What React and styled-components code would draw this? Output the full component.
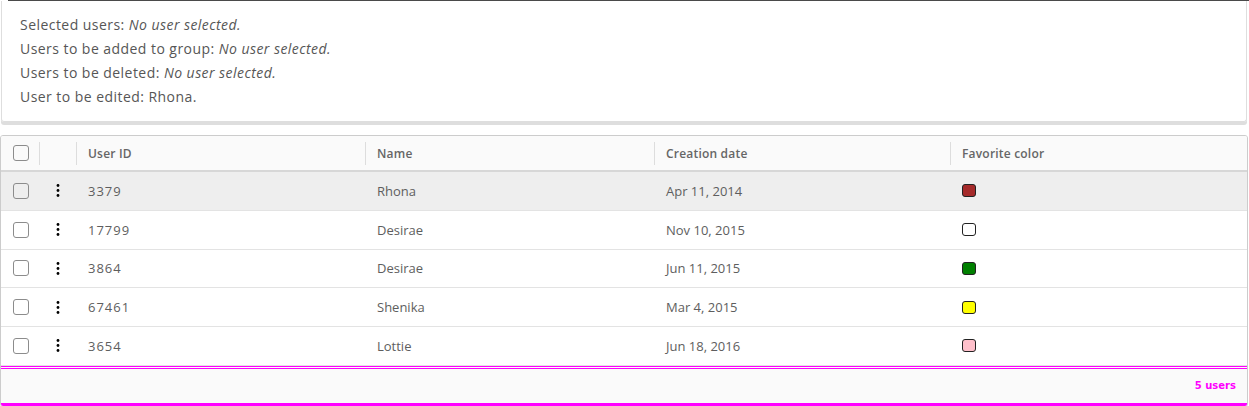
import React from 'react';
import styled, { createGlobalStyle } from 'styled-components';

const GlobalStyle = createGlobalStyle`
  body {
    margin: 0;
    background: #fff;
    font-family: "Open Sans", "Liberation Sans", sans-serif;
    color: #565656;
  }
`;

const Page = styled.div`
  width: 1249px;
  height: 406px;
  overflow: hidden;
`;

const TopRule = styled.div`
  height: 1px;
  margin-left: 8px;
  background: #4a4a4a;
`;

const Card = styled.div`
  margin: 0 2px 0 1px;
  padding: 12px 18px;
  border: 1px solid #dedede;
  border-top: none;
  border-radius: 0 0 3px 3px;
  box-shadow: 0 3px 0 0 #dedede;
`;

const Line = styled.div`
  font-size: 14px;
  line-height: 24px;
  letter-spacing: 0.45px;
  color: #565656;

  em {
    font-style: italic;
  }
`;

const Grid = styled.div`
  margin: 13px 1px 0 0;
  border: 1px solid #ccc;
  border-radius: 3px;
  overflow: hidden;
`;

const columns = '38px 37px 289px 289px 296px 1fr';

const HeaderRow = styled.div`
  display: grid;
  grid-template-columns: ${columns};
  height: 34px;
  background: #fafafa;
  border-bottom: 2px solid #d7d7d7;
`;

const HeaderCell = styled.div`
  position: relative;
  display: flex;
  align-items: center;
  padding-left: ${p => (p.$pad ? '12px' : '0')};
  font-size: 12px;
  font-weight: 600;
  letter-spacing: 0.2px;
  color: #666;

  &:not(:first-child)::before {
    content: '';
    position: absolute;
    left: 0;
    top: 6px;
    bottom: 5px;
    width: 1px;
    background: #ddd;
  }
`;

const Row = styled.div`
  display: grid;
  grid-template-columns: ${columns};
  height: 37.75px;
  border-bottom: 1px solid #e3e3e3;
  background: ${p => (p.$selected ? '#eeeeee' : '#fff')};

  &:last-child {
    border-bottom-color: #cfcfcf;
  }
`;

const Cell = styled.div`
  display: flex;
  align-items: center;
  padding-left: ${p => (p.$pad ? '12px' : '0')};
  justify-content: ${p => (p.$center ? 'center' : 'flex-start')};
  font-size: 13px;
  letter-spacing: ${p => (p.$numeric ? '1px' : '0')};
  color: #5e5e5e;
`;

const Checkbox = styled.span`
  display: inline-block;
  width: 16px;
  height: 16px;
  box-sizing: border-box;
  border: 1px solid #8c8c8c;
  border-radius: 3px;
  background: transparent;
`;

const Swatch = styled.span`
  display: inline-block;
  width: 14px;
  height: 13px;
  box-sizing: border-box;
  border: 1px solid #222;
  border-radius: 3px;
  background: ${p => p.$color};
`;

const Footer = styled.div`
  height: 34px;
  display: flex;
  align-items: center;
  justify-content: flex-end;
  padding-right: 11px;
  background: #fafafa;
  border-top: 3px double #ff00ff;
  border-bottom: 3px solid #ff00ff;
  font-family: "DejaVu Sans", sans-serif;
  font-size: 10px;
  font-weight: 700;
  color: #ff00ff;
`;

const Kebab = () => (
  <svg width="4" height="15" viewBox="0 0 4 15">
    <circle cx="2" cy="2.5" r="1.4" fill="#000" />
    <circle cx="2" cy="7.5" r="1.4" fill="#000" />
    <circle cx="2" cy="12.5" r="1.4" fill="#000" />
  </svg>
);

const users = [
  { id: 3379, name: 'Rhona', date: 'Apr 11, 2014', color: 'brown' },
  { id: 17799, name: 'Desirae', date: 'Nov 10, 2015', color: 'white' },
  { id: 3864, name: 'Desirae', date: 'Jun 11, 2015', color: 'green' },
  { id: 67461, name: 'Shenika', date: 'Mar 4, 2015', color: 'yellow' },
  { id: 3654, name: 'Lottie', date: 'Jun 18, 2016', color: 'pink' },
];

export default function App() {
  return (
    <Page>
      <GlobalStyle />
      <TopRule />
      <Card>
        <Line>Selected users: <em>No user selected.</em></Line>
        <Line>Users to be added to group: <em>No user selected.</em></Line>
        <Line>Users to be deleted: <em>No user selected.</em></Line>
        <Line>User to be edited: Rhona.</Line>
      </Card>

      <Grid>
        <HeaderRow>
          <HeaderCell $pad><Checkbox /></HeaderCell>
          <HeaderCell />
          <HeaderCell $pad>User ID</HeaderCell>
          <HeaderCell $pad>Name</HeaderCell>
          <HeaderCell $pad>Creation date</HeaderCell>
          <HeaderCell $pad>Favorite color</HeaderCell>
        </HeaderRow>
        {users.map((u, i) => (
          <Row key={u.id} $selected={i === 0}>
            <Cell $pad><Checkbox /></Cell>
            <Cell $center><Kebab /></Cell>
            <Cell $pad $numeric>{u.id}</Cell>
            <Cell $pad>{u.name}</Cell>
            <Cell $pad>{u.date}</Cell>
            <Cell $pad><Swatch $color={u.color} /></Cell>
          </Row>
        ))}
        <Footer>5 users</Footer>
      </Grid>
    </Page>
  );
}
